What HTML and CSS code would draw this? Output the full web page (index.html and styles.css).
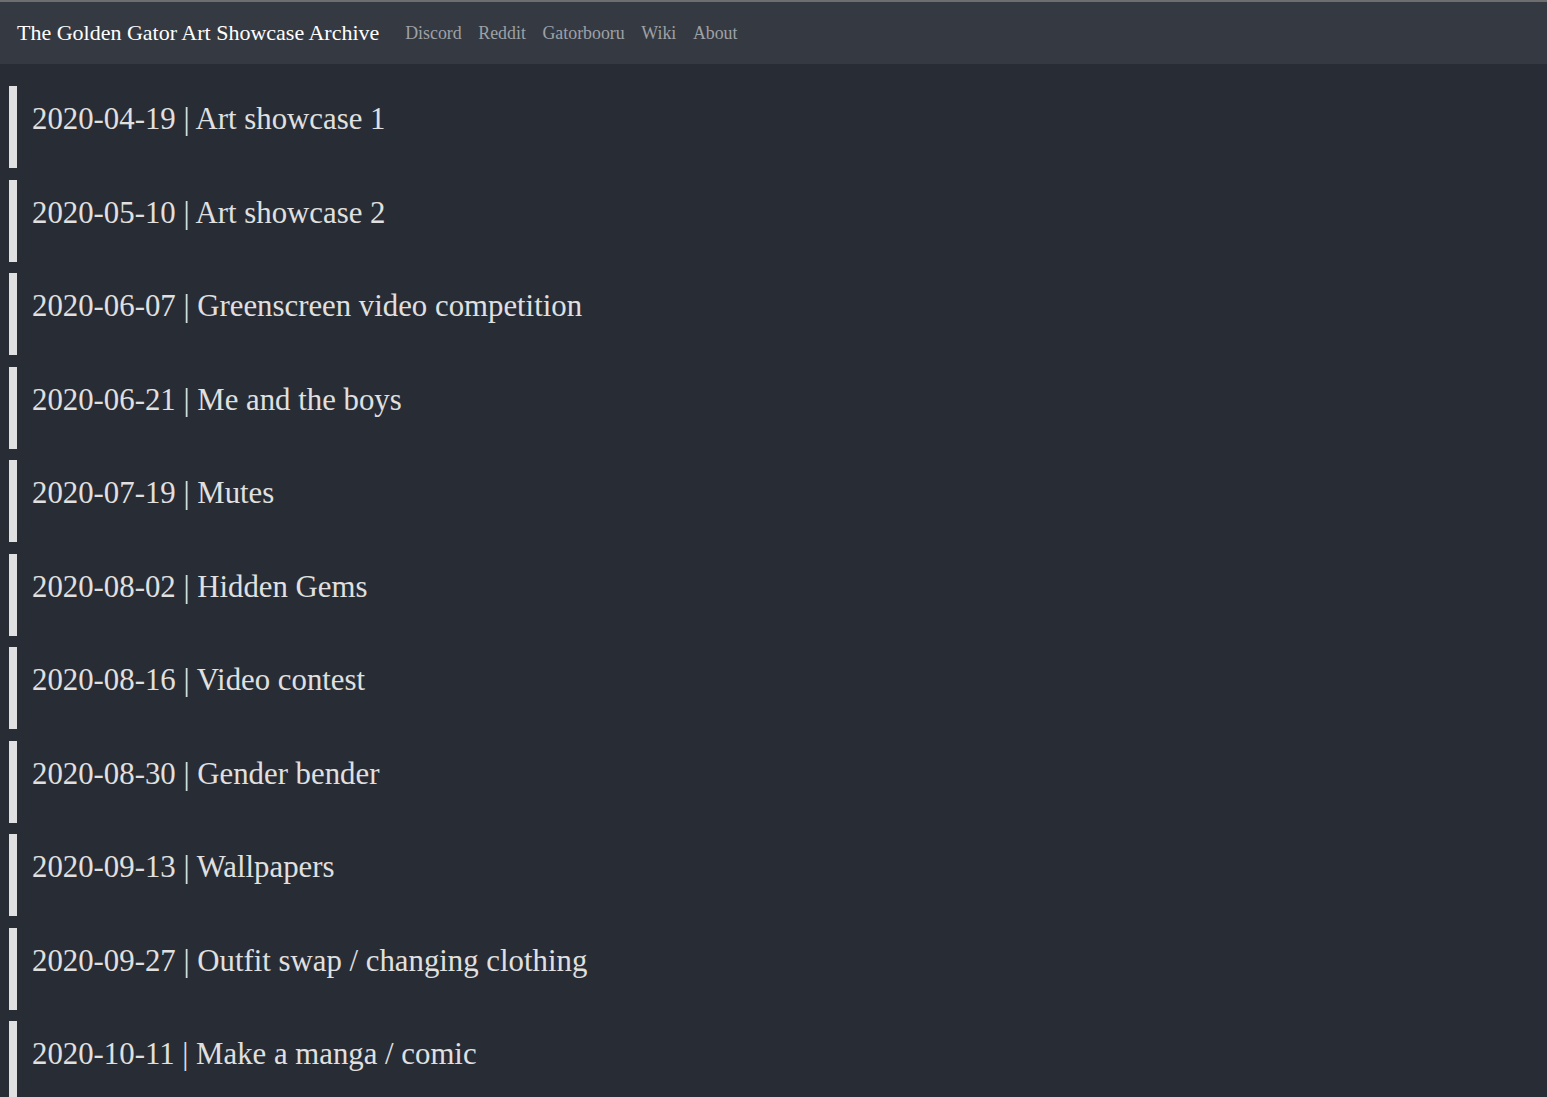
FILE: index.html
```html
<!DOCTYPE html>
<html lang="en">
<head>
<meta charset="utf-8">
<title>The Golden Gator Art Showcase Archive</title>
<link rel="stylesheet" href="styles.css">
</head>
<body>
<nav class="navbar">
  <a class="brand" href="#">The Golden Gator Art Showcase Archive</a>
  <ul class="nav-links">
    <li><a href="#">Discord</a></li>
    <li><a href="#">Reddit</a></li>
    <li><a href="#">Gatorbooru</a></li>
    <li><a href="#">Wiki</a></li>
    <li><a href="#">About</a></li>
  </ul>
</nav>
<main class="list">
  <a class="entry" href="#">2020-04-19 | Art showcase 1</a>
  <a class="entry" href="#">2020-05-10 | Art showcase 2</a>
  <a class="entry" href="#">2020-06-07 | Greenscreen video competition</a>
  <a class="entry" href="#">2020-06-21 | Me and the boys</a>
  <a class="entry" href="#">2020-07-19 | Mutes</a>
  <a class="entry" href="#">2020-08-02 | Hidden Gems</a>
  <a class="entry" href="#">2020-08-16 | Video contest</a>
  <a class="entry" href="#">2020-08-30 | Gender bender</a>
  <a class="entry" href="#">2020-09-13 | Wallpapers</a>
  <a class="entry" href="#">2020-09-27 | Outfit swap / changing clothing</a>
  <a class="entry" href="#">2020-10-11 | Make a manga / comic</a>
</main>
</body>
</html>
```

FILE: styles.css
```css
html, body {
  margin: 0;
  padding: 0;
}
body {
  background: #282c34;
  font-family: "Liberation Serif", "Times New Roman", serif;
  color: #e0e0e0;
  border-top: 2px solid #6e6e6e;
}
.navbar {
  display: flex;
  align-items: center;
  height: 62px;
  background: #353a42;
  padding: 0 17px;
}
.brand {
  color: #ffffff;
  text-decoration: none;
  font-size: 22px;
  margin-right: 17.6px;
}
.nav-links {
  display: flex;
  list-style: none;
  margin: 0;
  padding: 0;
}
.nav-links a {
  display: block;
  padding: 0 8.3px;
  color: #9ea1a6;
  text-decoration: none;
  font-size: 17.85px;
}
.list {
  display: flex;
  flex-direction: column;
  gap: 11.5px;
  padding: 22px 9px;
}
.entry {
  display: block;
  border-left: 8px solid #e0e0e0;
  padding: 15px 0 31px 15px;
  font-size: 30.8px;
  line-height: 36px;
  color: #e0e0e0;
  text-decoration: none;
}
```
